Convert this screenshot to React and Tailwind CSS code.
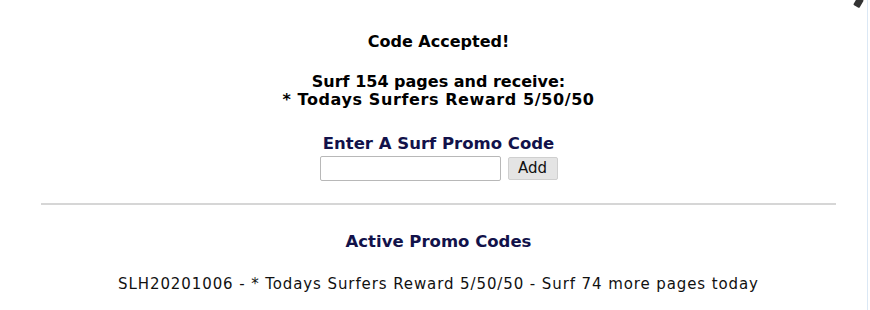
import React from 'react';

function App() {
    return (
        <div className="relative w-[870px] h-[310px] bg-white overflow-hidden" style={{ fontFamily: '"DejaVu Sans", Verdana, sans-serif' }}>
            <div className="w-[877px]">
                <div className="flex flex-col items-center pt-[34px] text-black">
                    <p className="text-[16px] font-bold leading-[16px]">Code Accepted!</p>
                    <p className="mt-[23px] text-[16px] font-bold leading-[18px] text-center">
                        Surf 154 pages and receive:<br />
                        <span className="tracking-[0.6px]">* Todays Surfers Reward 5/50/50</span>
                    </p>
                    <p className="mt-[26px] text-[16.5px] font-bold leading-[18px] text-[#12124a]">Enter A Surf Promo Code</p>
                    <div className="flex items-center gap-[7px] mt-[3px]">
                        <input type="text" className="w-[181px] h-[25px] border border-[#b8b8b8] rounded-[2px] bg-white" />
                        <button className="w-[50px] h-[23px] bg-[#e4e4e4] border border-[#cfcfcf] rounded-[2px] text-[15px] leading-none text-[#111]">Add</button>
                    </div>
                </div>

                <div className="mx-[41px] mt-[22px] h-[2px] bg-[#d6d6d6]"></div>

                <div className="flex flex-col items-center">
                    <p className="mt-[27px] text-[16.5px] font-bold leading-[20px] text-[#12124a]">Active Promo Codes</p>
                    <p className="mt-[23px] text-[15px] tracking-[0.9px] leading-[18px] text-[#111]">
                        SLH20201006 - * Todays Surfers Reward 5/50/50 - Surf 74 more pages today
                    </p>
                </div>
            </div>

            <div className="absolute right-[8px] top-[-2px] w-[7px] h-[9px] bg-[#333] rotate-[30deg] rounded-[1px]"></div>
            <div className="absolute right-[2px] top-0 bottom-0 w-px bg-[#dbe8f5]"></div>
        </div>
    );
}

export default App;
